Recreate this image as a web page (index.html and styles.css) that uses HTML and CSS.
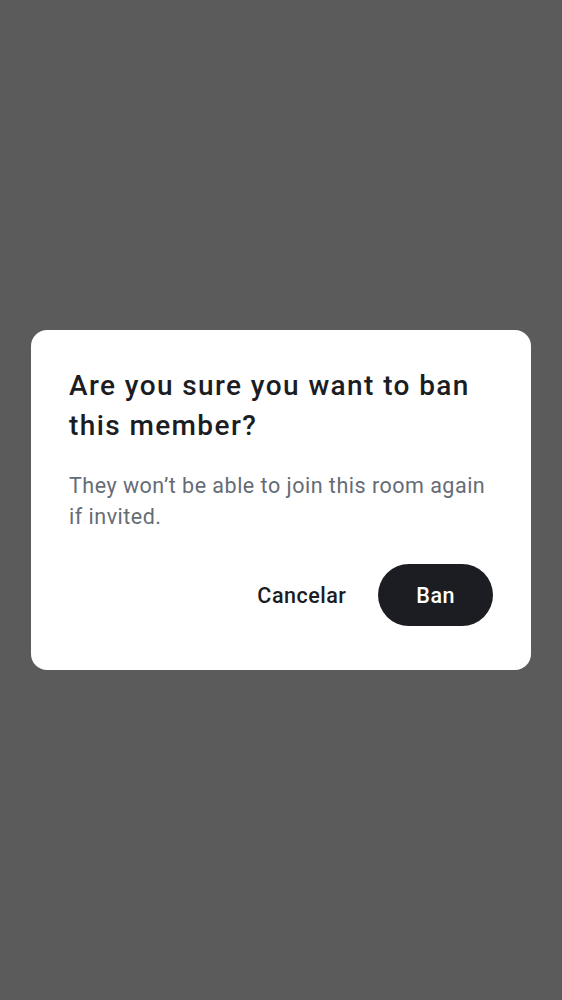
FILE: index.html
```html
<!DOCTYPE html>
<html>
<head>
<meta charset="utf-8">
<link rel="stylesheet" href="styles.css">
</head>
<body>
<div class="scrim">
  <div class="dialog" role="dialog">
    <h1 class="title">Are you sure you want to ban this member?</h1>
    <p class="body">They won’t be able to join this room again if invited.</p>
    <div class="actions">
      <button class="btn btn-text">Cancelar</button>
      <button class="btn btn-primary">Ban</button>
    </div>
  </div>
</div>
</body>
</html>
```

FILE: styles.css
```css
html, body {
  margin: 0;
  padding: 0;
  height: 100%;
}
body {
  font-family: Roboto, "Noto Sans", sans-serif;
  background: #5b5b5b;
}
.scrim {
  height: 1000px;
  display: flex;
  align-items: center;
  justify-content: center;
}
.dialog {
  width: 500px;
  box-sizing: border-box;
  background: #ffffff;
  border-radius: 16px;
  padding: 36px 38px 44px 38px;
}
.title {
  margin: 0;
  font-size: 28px;
  line-height: 40px;
  font-weight: 500;
  color: #1b1d22;
  letter-spacing: 1.4px;
}
.body {
  margin: 24px 0 0 0;
  font-size: 21.5px;
  line-height: 31px;
  font-weight: 400;
  color: #656c76;
  letter-spacing: 0.5px;
}
.actions {
  margin-top: 32px;
  display: flex;
  justify-content: flex-end;
  align-items: center;
  gap: 8px;
}
.btn {
  font-family: Roboto, "Noto Sans", sans-serif;
  font-size: 21.5px;
  font-weight: 500;
  height: 62px;
  border: none;
  border-radius: 31px;
  padding: 0 24px;
  cursor: pointer;
  letter-spacing: 0.5px;
}
.btn-text {
  background: transparent;
  color: #1b1d22;
}
.btn-primary {
  background: #1b1d22;
  color: #ffffff;
  padding: 0 38px;
}
```
